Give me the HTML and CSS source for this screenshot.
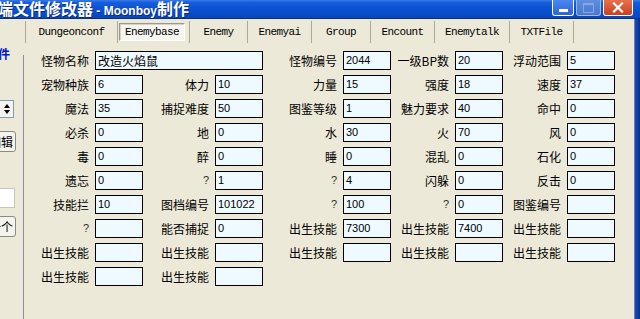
FILE: index.html
```html
<!DOCTYPE html>
<html lang="zh-CN">
<head>
    <meta charset="UTF-8">
    <title>端文件修改器 - Moonboy制作</title>
    <link rel="stylesheet" href="styles.css">
</head>
<body>

<div class="window">
    <div class="titlebar">
        <div class="title"><span class="cjk">端文件修改器</span> - Moonboy<span class="cjk">制作</span></div>
        <div class="caption-buttons">
            <div class="cap-btn cap-min"><span class="min-bar"></span></div>
            <div class="cap-btn cap-max"><span class="max-box"></span></div>
            <div class="cap-btn cap-close">
                <svg width="12" height="11" viewBox="0 0 12 11"><path d="M2 1.5 L10 9.5 M10 1.5 L2 9.5" stroke="#fff" stroke-width="2.2" stroke-linecap="square"/></svg>
            </div>
        </div>
    </div>

    <div class="frame">
        <div class="client">
            <div class="tabs">
                <div class="tab t-dungeon">Dungeonconf</div>
                <div class="tab t-base"><span class="tab-selected">Enemybase</span></div>
                <div class="tab t-enemy">Enemy</div>
                <div class="tab t-ai">Enemyai</div>
                <div class="tab t-group">Group</div>
                <div class="tab t-encount">Encount</div>
                <div class="tab t-talk">Enemytalk</div>
                <div class="tab t-txt">TXTFile</div>
            </div>

            <div class="main">
                <div class="sidebar">
                    <div class="side-title">文件</div>
                    <div class="spin">
                        <span class="spin-up"></span>
                        <span class="spin-down"></span>
                    </div>
                    <div class="side-btn btn-edit">编辑</div>
                    <div class="side-input"></div>
                    <div class="side-btn btn-next">下一个</div>
                </div>

                <div class="page">
                    <div class="form" id="form"></div>
                </div>
            </div>
        </div>
        <div class="frame-right"></div>
    </div>
</div>

<script>
    // label / value pairs, row by row, five columns
    const rows = [
        [["怪物名称", "改造火焰鼠", "wide"], ["怪物编号", "2044"], ["一级BP数", "20"], ["浮动范围", "5"]],
        [["宠物种族", "6"], ["体力", "10"], ["力量", "15"], ["强度", "18"], ["速度", "37"]],
        [["魔法", "35"], ["捕捉难度", "50"], ["图鉴等级", "1"], ["魅力要求", "40"], ["命中", "0"]],
        [["必杀", "0"], ["地", "0"], ["水", "30"], ["火", "70"], ["风", "0"]],
        [["毒", "0"], ["醉", "0"], ["睡", "0"], ["混乱", "0"], ["石化", "0"]],
        [["遗忘", "0"], ["?", "1"], ["?", "4"], ["闪躲", "0"], ["反击", "0"]],
        [["技能拦", "10"], ["图档编号", "101022"], ["?", "100"], ["?", "0"], ["图鉴编号", ""]],
        [["?", ""], ["能否捕捉", "0"], ["出生技能", "7300"], ["出生技能", "7400"], ["出生技能", ""]],
        [["出生技能", ""], ["出生技能", ""], ["出生技能", ""], ["出生技能", ""], ["出生技能", ""]],
        [["出生技能", ""], ["出生技能", ""]]
    ];

    const form = document.getElementById("form");
    let html = "";
    rows.forEach(row => {
        row.forEach(([label, value, kind]) => {
            const q = label === "?" ? " q" : "";
            html += `<label class="lbl${q}">${label}</label>`;
            html += `<div class="field${kind === "wide" ? " wide" : ""}">${value}</div>`;
        });
        for (let i = row.length + (row[0][2] === "wide" ? 1 : 0); i < 5; i++) {
            html += `<span></span><span></span>`;
        }
    });
    form.innerHTML = html;
</script>

</body>
</html>
```

FILE: styles.css
```css
body {
    margin: 0;
    background-color: #ece9d8;
    font-family: "Noto Sans CJK SC", "Liberation Sans", sans-serif;
    font-size: 12px;
    color: #000;
    overflow: hidden;
}
.window {
    width: 640px;
    height: 319px;
    display: flex;
    flex-direction: column;
    overflow: hidden;
}
/* title bar */
.titlebar {
    height: 18px;
    flex: none;
    display: flex;
    align-items: center;
    justify-content: space-between;
    background: linear-gradient(to bottom, #3a7ae6 0%, #145ddc 15%, #0a50d2 55%, #0847b8 100%);
    border-bottom: 1px solid #0a2f8c;
}
.title {
    margin-left: -3px;
    color: white;
    font-family: "Liberation Sans", sans-serif;
    font-weight: bold;
    font-size: 12px;
    white-space: nowrap;
    text-shadow: 1px 1px 0 #0a2a80;
    line-height: 18px;
}
.title .cjk {
    font-family: "Noto Sans CJK SC", sans-serif;
    font-size: 16px;
    font-weight: bold;
}
.caption-buttons {
    display: flex;
    gap: 2px;
    margin-right: 7px;
    align-self: flex-start;
}
.cap-btn {
    width: 22px;
    height: 16px;
    border: 1px solid #fff;
    border-top: none;
    border-radius: 0 0 3px 3px;
    box-sizing: border-box;
    display: flex;
    align-items: center;
    justify-content: center;
}
.cap-min {
    background: linear-gradient(to bottom, #4a86f0, #2d63d8);
    align-items: flex-end;
}
.min-bar {
    width: 9px;
    height: 3px;
    background: white;
    margin-bottom: 3px;
}
.cap-max {
    width: 25px;
    background: linear-gradient(to bottom, #5d8ee0, #4a78d0);
    border-color: #9cb6e8;
}
.max-box {
    width: 9px;
    height: 7px;
    border: 1px solid #8aa8e0;
    border-top-width: 2px;
}
.cap-close {
    width: 30px;
    background: linear-gradient(to bottom, #e8704e, #c8401f);
}
/* frame */
.frame {
    flex: 1;
    display: flex;
    min-height: 0;
}
.client {
    flex: 1;
    display: flex;
    flex-direction: column;
}
.frame-right {
    width: 5px;
    background: linear-gradient(to right, #1a4ab8, #0c2f88);
    border-left: 1px solid #5f7fc8;
}
/* tabs */
.tabs {
    height: 25px;
    display: flex;
    align-items: stretch;
    padding-left: 25px;
    font-family: "Liberation Mono", monospace;
    font-size: 11px;
    letter-spacing: -0.6px;
}
.tab {
    display: flex;
    align-items: center;
    justify-content: center;
    border-left: 1px solid #aca899;
    margin: 2px 0 1px;
    box-sizing: border-box;
}
.t-dungeon { width: 92px; }
.t-base { width: 72px; justify-content: flex-start; padding-left: 1px; }
.t-enemy { width: 58px; }
.t-ai { width: 64px; }
.t-group { width: 59px; }
.t-encount { width: 64px; }
.t-talk { width: 75px; }
.t-txt { width: 65px; border-right: 1px solid #aca899; }
.tab-selected {
    width: 66px;
    height: 18px;
    box-sizing: border-box;
    display: flex;
    align-items: center;
    justify-content: center;
    background: #f6f5f0;
    border: 1px solid #9a9890;
    border-right-color: #fff;
    border-bottom-color: #fff;
    box-shadow: inset 1px 1px 0 #d6d3c6;
}
/* main area */
.main {
    flex: 1;
    display: flex;
}
.sidebar {
    width: 24px;
    flex: none;
    overflow: hidden;
    background: linear-gradient(#8c8ca8, #8c8ca8) no-repeat right 0 top 11px / 1px 100%;
}
.side-title {
    width: 24px;
    margin-left: -14px;
    color: #0018c8;
    font-weight: bold;
    font-size: 12px;
    line-height: 12px;
    margin-top: 4px;
    white-space: nowrap;
}
.spin {
    width: 14px;
    height: 18px;
    margin-top: 40px;
    border: 1px solid #7f9db9;
    border-left: none;
    box-sizing: border-box;
    background: #f4f3ee;
    display: flex;
    flex-direction: column;
    align-items: center;
    justify-content: center;
    gap: 2px;
}
.spin-up {
    border-left: 3px solid transparent;
    border-right: 3px solid transparent;
    border-bottom: 4px solid #000;
}
.spin-down {
    border-left: 3px solid transparent;
    border-right: 3px solid transparent;
    border-top: 4px solid #000;
}
.side-btn {
    width: 40px;
    margin-left: -24px;
    height: 21px;
    box-sizing: border-box;
    text-align: right;
    line-height: 19px;
    padding-right: 2px;
    background: #f4f3ee;
    border: 1px solid #8a8a80;
    border-radius: 0 3px 3px 0;
    white-space: nowrap;
    font-size: 12px;
}
.btn-edit {
    margin-top: 13px;
}
.side-input {
    width: 15px;
    height: 20px;
    margin-top: 36px;
    background: #fff;
    border: 1px solid #c9c7ba;
    border-left: none;
    box-sizing: border-box;
}
.btn-next {
    margin-top: 8px;
}
/* form */
.page {
    flex: 1;
    padding-top: 7px;
}
.form {
    display: grid;
    grid-template-columns: 65px 48px 72px 48px 80px 48px 64px 48px 64px 48px;
    grid-auto-rows: 19px;
    row-gap: 5px;
    margin-left: 6px;
}
.lbl {
    text-align: right;
    padding-right: 6px;
    line-height: 19px;
    white-space: nowrap;
    font-size: 12px;
}
.lbl.q {
    font-family: "Liberation Sans", sans-serif;
    font-size: 11px;
    color: #333;
}
.field {
    border: 1px solid #000;
    background-color: #eefaff;
    box-sizing: border-box;
    padding-left: 2px;
    line-height: 17px;
    font-family: "Liberation Sans", "Noto Sans CJK SC", sans-serif;
    font-size: 11px;
    overflow: hidden;
    white-space: nowrap;
}
.field.wide {
    grid-column: span 3;
    font-family: "Noto Sans CJK SC", sans-serif;
    font-size: 12px;
}
```
